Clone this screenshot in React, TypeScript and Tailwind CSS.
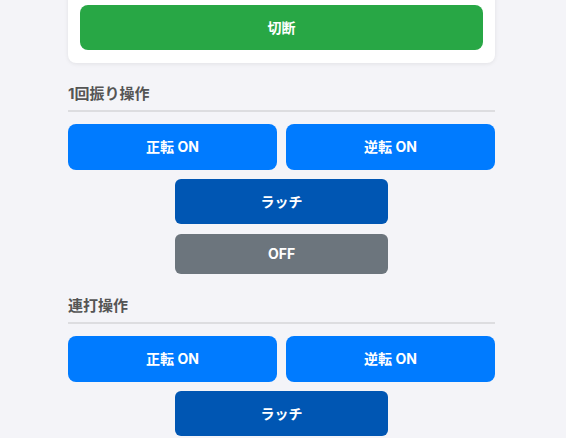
const font = { fontFamily: 'Inter, "Noto Sans CJK JP", sans-serif' };

function Heading({ children }: { children: string }) {
  return (
    <h2 className="mt-[19px] border-b-2 border-[#dddde0] pb-[4px] text-[15px] font-bold leading-[24px] text-[#555]">
      {children}
    </h2>
  );
}

function DirectionRow() {
  return (
    <div className="mt-3 grid grid-cols-2 gap-[9px]">
      <button className="h-[46px] rounded-lg bg-[#007bff] text-sm font-bold text-white">正転 ON</button>
      <button className="h-[46px] rounded-lg bg-[#007bff] text-sm font-bold text-white">逆転 ON</button>
    </div>
  );
}

function Latch() {
  return (
    <button className="mx-auto mt-[9px] block h-[45px] w-[213px] rounded-md bg-[#0056b3] text-sm font-bold text-white">
      ラッチ
    </button>
  );
}

export default function App() {
  return (
    <div className="h-[438px] overflow-hidden bg-[#f4f4f8]" style={font}>
      <div className="ml-[68px] w-[427px]">
        <div className="-mt-4 rounded-lg bg-white px-3 pb-[13px] pt-[21px] shadow-[0_1px_4px_rgba(0,0,0,0.08)]">
          <button className="h-[45px] w-full rounded-lg bg-[#28a745] text-sm font-bold text-white">切断</button>
        </div>

        <Heading>1回振り操作</Heading>
        <DirectionRow />
        <Latch />
        <button className="mx-auto mt-[10px] block h-[40px] w-[213px] rounded-md bg-[#6c757d] text-sm font-bold text-white">
          OFF
        </button>

        <div className="pt-px">
          <Heading>連打操作</Heading>
        </div>
        <DirectionRow />
        <Latch />
      </div>
    </div>
  );
}
